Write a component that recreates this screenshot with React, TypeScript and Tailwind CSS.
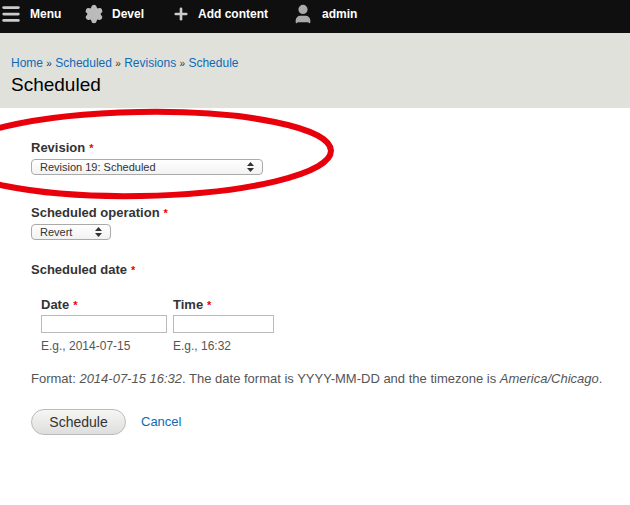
import { Menu, Settings, Plus, User } from "lucide-react";

const Req = () => <span className="text-[#e00] ml-1 text-[11px] align-top">*</span>;

const Arrows = () => (
  <svg width="7" height="10" viewBox="0 0 7 10" className="ml-auto">
    <path d="M3.5 0 L7 4 H0Z M3.5 10 L7 6 H0Z" fill="#333" />
  </svg>
);

export default function App() {
  return (
    <div className="relative w-[630px] h-[505px] overflow-hidden bg-white text-[#333] leading-[16px]" style={{ fontFamily: '"Liberation Sans", Arial, sans-serif' }}>
      {/* Toolbar */}
      <div className="h-[33px] bg-[#0f0f0f] flex items-center pb-[6px] text-white font-bold text-[12px]">
        <div className="flex items-center gap-2 w-[84px]">
          <Menu size={22} strokeWidth={3} className="text-[#ccc]" />
          <span>Menu</span>
        </div>
        <div className="flex items-center gap-2 w-[88px]">
          <Settings size={20} className="text-[#bbb]" fill="#bbb" />
          <span>Devel</span>
        </div>
        <div className="flex items-center gap-2 w-[120px]">
          <Plus size={18} strokeWidth={3.5} className="text-[#ccc]" />
          <span>Add content</span>
        </div>
        <div className="flex items-center gap-2">
          <User size={22} fill="#aaa" className="text-[#aaa]" />
          <span>admin</span>
        </div>
      </div>
      {/* Header */}
      <div className="h-[75px] bg-[#e1e1dc] px-[11px] pt-[22px]">
        <div className="text-[12px] text-[#0f6ab4]">
          Home <span className="text-[#333] text-[10px]">»</span> Scheduled <span className="text-[#333] text-[10px]">»</span> Revisions <span className="text-[#333] text-[10px]">»</span> Schedule
        </div>
        <div className="text-[19px] leading-[22px] text-black mt-[2px]">Scheduled</div>
      </div>
      {/* Form */}
      <div className="px-[31px] pt-[32px] text-[13px]">
        <div className="font-bold">Revision<Req /></div>
        <div className="mt-[3px] w-[232px] h-[16px] border border-[#aaa] rounded-[4px] flex items-center px-[8px] text-[11px] bg-gradient-to-b from-white to-[#f2f2f2]">
          Revision 19: Scheduled<Arrows />
        </div>
        <div className="font-bold mt-[30px]">Scheduled operation<Req /></div>
        <div className="mt-[3px] w-[80px] h-[16px] border border-[#aaa] rounded-[4px] flex items-center px-[8px] text-[11px] bg-gradient-to-b from-white to-[#f2f2f2]">
          Revert<Arrows />
        </div>
        <div className="font-bold mt-[22px]">Scheduled date<Req /></div>
        <div className="flex gap-[6px] pl-[10px] mt-[19px]">
          <div className="w-[126px]">
            <div className="font-bold">Date<Req /></div>
            <div className="mt-[2px] h-[18px] border border-[#bbb]" />
            <div className="mt-[5px] text-[12px] text-[#555]">E.g., 2014-07-15</div>
          </div>
          <div className="w-[101px]">
            <div className="font-bold">Time<Req /></div>
            <div className="mt-[2px] h-[18px] border border-[#bbb]" />
            <div className="mt-[5px] text-[12px] text-[#555]">E.g., 16:32</div>
          </div>
        </div>
        <div className="mt-[17px] text-[13px] text-[#555] whitespace-nowrap">
          Format: <i>2014-07-15 16:32</i>. The date format is YYYY-MM-DD and the timezone is <i>America/Chicago</i>.
        </div>
        <div className="flex items-center mt-[22px] gap-[15px]">
          <div className="w-[95px] h-[26px] rounded-full border border-[#bbb] bg-gradient-to-b from-[#f6f6f4] to-[#dedede] flex items-center justify-center text-[14px] text-[#333]">Schedule</div>
          <span className="text-[#0f6ab4] text-[13px]">Cancel</span>
        </div>
      </div>
      {/* annotation */}
      <svg className="absolute left-0 top-0 pointer-events-none" width="630" height="505">
        <ellipse cx="140" cy="154" rx="191" ry="42" fill="none" stroke="#e8000b" strokeWidth="6" transform="rotate(-1 140 154)" />
      </svg>
    </div>
  );
}
